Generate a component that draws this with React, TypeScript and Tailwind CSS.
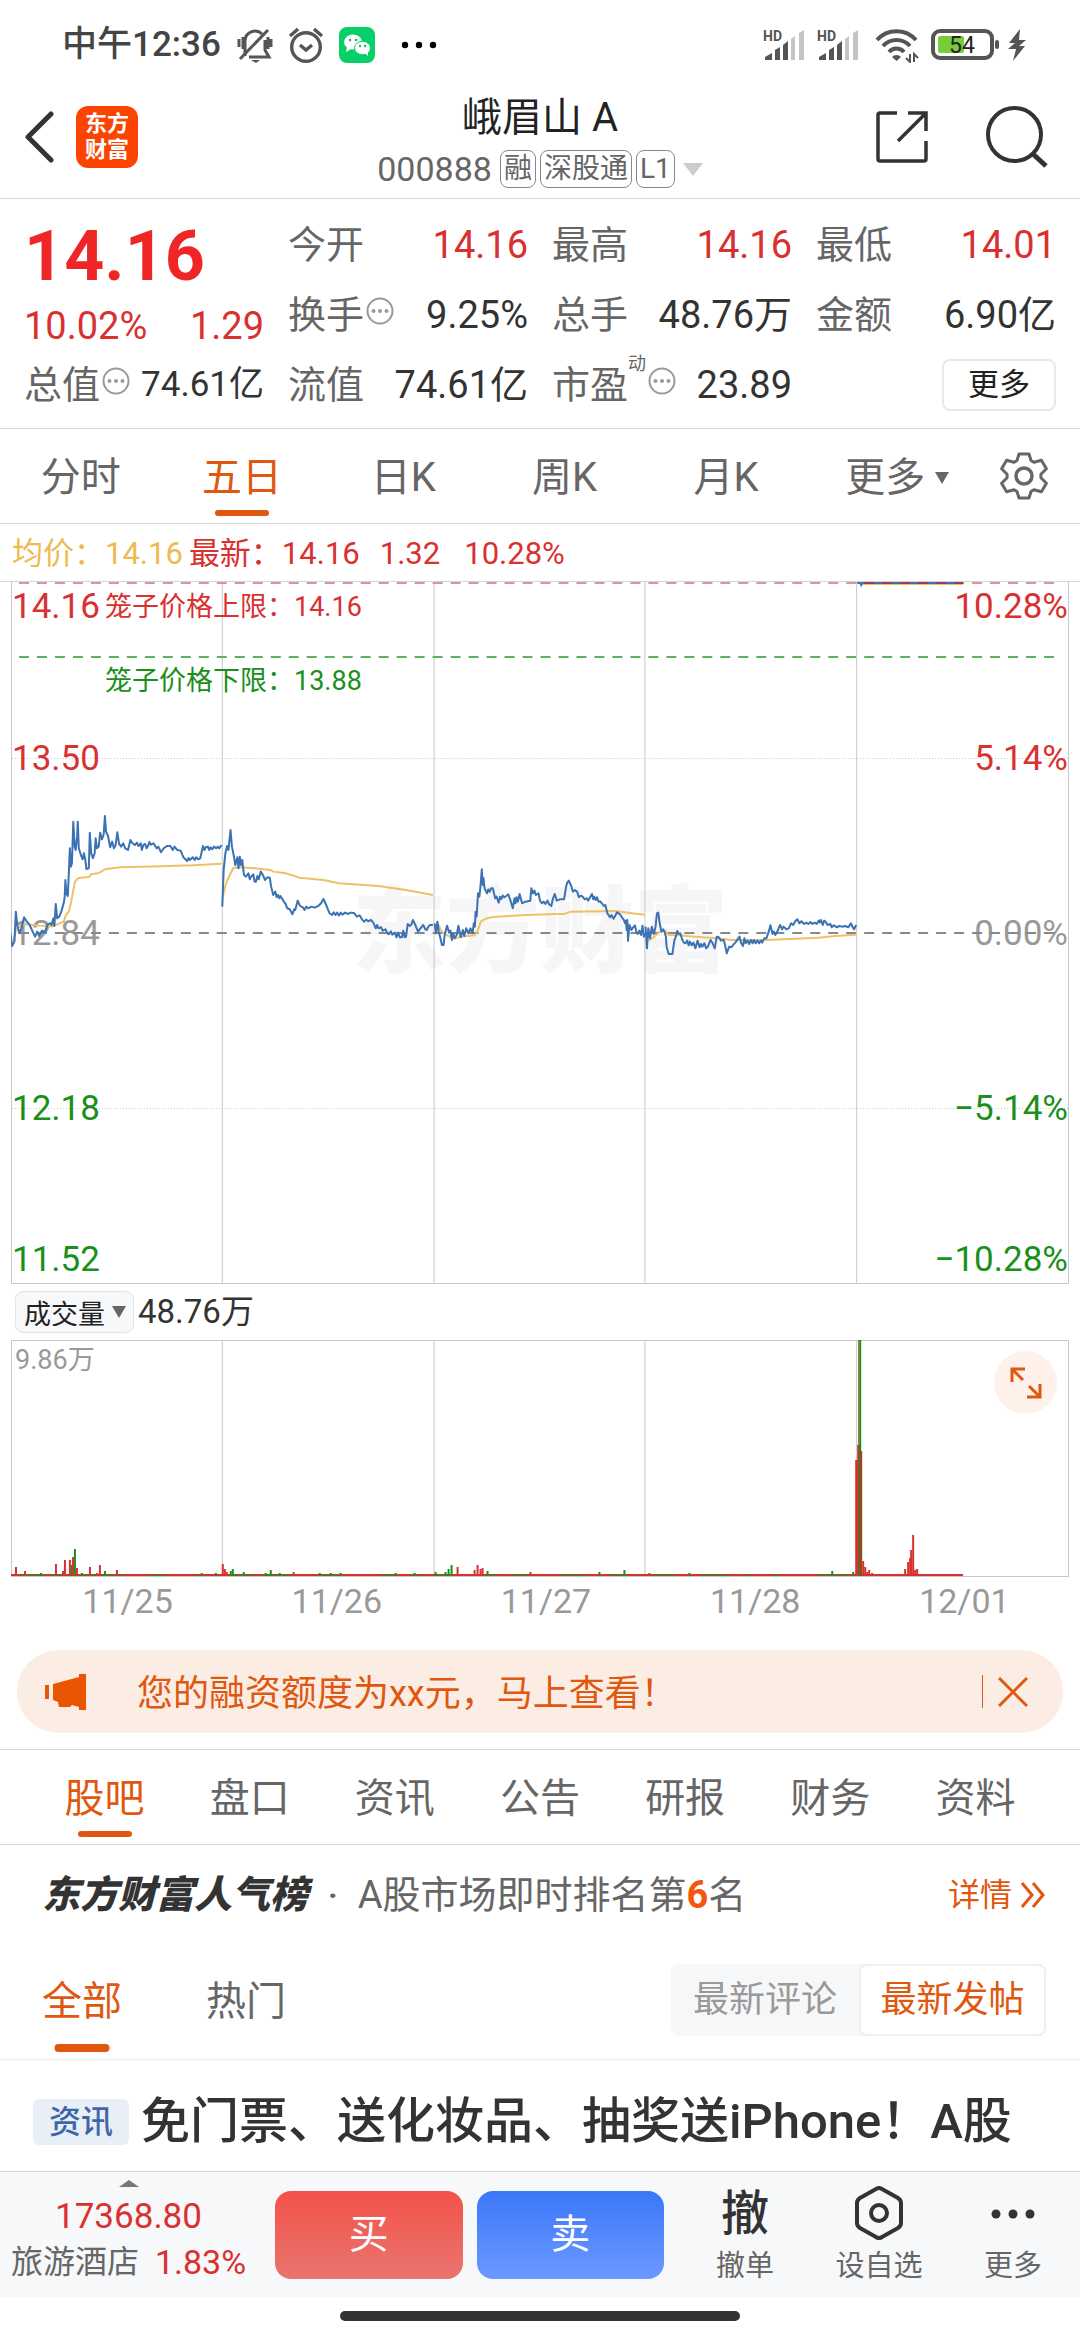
import React from "react";

const PRICE_A: string[] = [
  "30,1240 35,1278 42,1265 46,1175 50,1215 56,1240 62,1225 70,1192 78,1205 86,1215 95,1235 102,1250 108,1235 114,1248 122,1232 130,1237 138,1215 145,1210 150,1215 155,1195 158,1218 162,1152 166,1195 172,1190 178,1175 185,1150 188,1130 190,1080 193,1120 197,1128 200,1060 203,985 206,1040 209,1030 213,905 217,980 220,990 224,950 226,905 229,985 235,1005 240,1018 244,1000 248,1020 251,1047 258,1045 261,938 265,1000 270,1015 275,1000 278,955 282,985 287,980 291,938 296,958 301,945 305,888 308,935 314,948 320,982 326,965 331,985 336,975 341,937 346,972 352,980 358,970 364,985 372,990 379,960 385,970 392,975 398,968 402,978 409,970 412,990 417,975 422,972 426,985 430,978 434,966 438,974 446,970 455,985 460,980 468,997 476,985 485,978 495,978 502,990 507,980 515,990 525,992 533,1012 544,1023 548,1014 552,1020 560,1012 566,1020 570,1012 576,1018 582,1015 590,978 594,990 598,982 604,980 608,990 612,982 617,988 622,980 628,985 633,980 637,985 644,975",
  "646,1160 650,1050 655,1000 660,978 664,990 670,930 674,980 680,1010 684,1035 690,1012 693,1045 697,1010 700,1035 704,1020 709,1065 715,1070 722,1060 726,1078 730,1070 736,1063 740,1085 744,1085 748,1068 752,1078 758,1055 764,1065 770,1080 777,1072 784,1073 788,1100 794,1125 800,1115 804,1132 808,1125 812,1135 815,1128 825,1145 830,1152 835,1165 842,1168 850,1183 855,1168 858,1170 865,1142 872,1158 880,1162 885,1170 890,1160 895,1165 905,1160 915,1163 925,1158 933,1150 940,1137 948,1155 953,1168 958,1180 965,1185 970,1177 975,1185 980,1178 985,1187 990,1178 995,1184 1003,1178 1010,1182 1020,1178 1030,1180 1037,1190 1045,1186 1052,1198 1058,1205 1064,1199 1070,1204 1078,1200 1085,1208 1092,1225 1096,1215 1100,1225 1108,1222 1112,1232 1120,1228 1126,1240 1130,1243 1136,1234 1140,1244 1148,1238 1152,1252 1157,1238 1162,1252 1168,1252 1172,1232 1176,1252 1180,1250 1185,1212 1190,1218 1195,1215 1200,1200 1207,1215 1211,1225 1215,1235 1222,1225 1230,1215 1236,1228 1240,1230 1245,1220 1250,1215 1258,1215",
];

const AVG_A: string[] = [
  "38,1265 48,1225 70,1212 110,1217 150,1220 185,1205 192,1185 200,1175 207,1145 213,1110 218,1085 228,1074 258,1071 265,1063 285,1060 305,1048 350,1042 470,1039 560,1036 644,1031",
  "648,1130 655,1098 661,1080 668,1065 678,1044 700,1042 740,1045 785,1050 795,1055 830,1060 870,1073 940,1080 985,1090 1100,1098 1180,1110 1258,1125",
];

const PRICE_B: string[] = [
  "276,430 280,460 284,425 288,455 294,480 297,495 302,495 305,465 312,437 318,458 322,452 326,480 330,460 334,475 340,465 345,437 352,472 358,450 362,468 368,445 374,460 380,445 386,460 390,430 393,440 395,395 398,410 402,340 406,350 410,310 413,268 416,315 418,295 421,325 428,340 432,328 436,335 440,325 445,325 452,355 456,350 462,368 466,350 470,357 474,347 478,352 484,348 490,343 496,360 503,385 508,355 511,370 514,352 518,365 523,342 530,370 540,365 554,362 557,325 562,340 566,332 570,345 578,340 582,362 588,370 593,365 598,372 604,362 608,372 615,378 620,355 625,342 631,362 640,358 652,358 658,320 661,308 666,302 669,310 672,315 678,335 684,330 690,335 695,352 700,347 706,350 712,358 718,355 722,362 725,357 733,342 737,358 740,350 744,360 748,352 752,365 757,364 762,370 768,378 772,375 778,400 786,412 790,405 796,416 802,405 806,397 815,403 820,412 826,420 829,430 832,422 834,450 836,420 838,482 842,435 848,450 853,442 858,436 862,455 866,462 871,452 876,465 880,437 884,470 887,460",
  "889,440 893,505 897,445 902,475 907,440 913,462 918,440 922,400 926,398 930,430 935,455 940,448 945,458 948,470 950,500 956,522 967,522 970,500 973,480 977,470 981,453 986,462 990,460 995,478 1000,488 1005,490 1010,482 1014,496 1018,485 1023,496 1028,488 1034,505 1040,482 1046,502 1050,492 1054,500 1060,490 1065,505 1070,500 1078,480 1084,490 1090,505 1096,470 1102,472 1108,482 1116,480 1120,495 1125,520 1132,500 1138,502 1145,493 1150,488 1154,482 1162,470 1167,490 1172,498 1176,475 1180,490 1185,482 1190,492 1195,480 1200,490 1204,480 1209,490 1214,482 1219,490 1224,482 1228,488 1234,475 1240,475 1246,458 1252,436 1258,462 1262,455 1266,465 1272,455 1280,435 1286,448 1290,440 1298,448 1305,445 1312,430 1318,435 1324,424 1330,418 1336,430 1342,424 1350,432 1356,428 1362,432 1368,426 1374,432 1380,428 1386,432 1392,422 1395,428 1398,420 1404,435 1408,422 1412,425 1418,435 1426,432 1430,442 1436,436 1445,442 1452,438 1460,440 1470,438 1478,442 1486,430 1490,440 1495,448 1501,435",
];

const AVG_B: string[] = [
  "285,430 295,452 310,465 335,476 352,470 392,466 400,455 410,425 425,416 445,411 560,404 655,401 672,395 800,393 850,400 887,404",
  "898,482 915,470 930,455 945,452 958,466 985,466 1030,470 1090,474 1140,480 1240,480 1290,478 1390,473 1440,468 1500,464",
];

const RED = "#d93030";
const GREEN = "#1a8f1a";

const BARS: [number, number, "r" | "g"][] = [
  [16, 9, "r"], [25, 5, "r"], [41, 3, "g"], [56, 12, "r"], [63, 5, "r"], [65, 16, "r"], [70, 16, "r"],
  [72, 11, "g"], [73, 19, "r"], [75, 27, "g"], [77, 8, "r"], [82, 3, "g"], [90, 9, "r"], [97, 3, "r"], [100, 11, "r"],
  [105, 5, "g"], [117, 6, "r"], [202, 3, "r"], [216, 3, "g"], [223, 12, "r"], [225, 7, "r"], [227, 4, "r"],
  [231, 5, "g"], [233, 7, "g"], [244, 4, "g"], [266, 3, "g"], [271, 6, "g"], [280, 3, "g"], [294, 4, "r"], [320, 3, "g"],
  [331, 3, "g"], [341, 3, "g"], [396, 3, "g"], [415, 3, "g"], [436, 4, "g"], [446, 4, "g"], [449, 7, "g"], [452, 11, "g"], [458, 9, "r"],
  [475, 6, "r"], [478, 11, "r"], [481, 7, "r"], [483, 8, "r"], [488, 5, "g"], [531, 4, "r"], [600, 4, "g"],
  [625, 6, "g"], [650, 3, "r"], [690, 3, "g"], [833, 5, "g"], [854, 4, "g"],
  [864, 15, "r"], [866, 9, "r"], [868, 4, "r"], [870, 6, "r"], [873, 3, "r"],
  [906, 7, "r"], [909, 14, "r"], [911, 18, "r"], [912, 26, "r"], [914, 41, "r"], [916, 6, "r"], [918, 7, "r"],
];

const GREEN_BASE: [number, number][] = [
  [20, 24], [50, 16], [84, 12], [102, 20], [150, 16], [196, 10], [232, 22], [262, 30], [320, 22],
  [380, 14], [410, 12], [436, 16], [486, 12], [512, 20], [560, 26], [610, 18], [652, 24], [700, 30], [746, 6], [772, 8], [820, 30],
];

function Signal() {
  return (
    <svg viewBox="0 0 42 38" className="h-[38px] w-[42px] overflow-visible" aria-hidden="true">
      <text x="0" y="15" fontSize="14" fontWeight="700" fill="#555" fontFamily="Roboto, sans-serif">HD</text>
      <path d="M2 34v-3l7-4v7zM12 34V24l5-3v13zM20 34V19l5-4v19z" fill="#555" />
      <path d="M28 34V13l4-3v24zM36 34V7l5-3v30z" fill="#c4c4c4" />
    </svg>
  );
}

function StatusBar() {
  return (
    <div className="flex h-[72px] items-center justify-between pt-[18px] pr-[54px] pl-[62px] text-[#444]">
      <div className="flex items-center">
        <span className="text-[35px] leading-9 font-medium">中午12:36</span>
        <svg viewBox="0 0 36 36" className="ml-4 size-9" fill="none" stroke="#555" strokeWidth="3" aria-hidden="true">
          <path d="M8 29V14a10 10 0 0 1 17-7M28 13v10l4 7H12M2 12v8M6 10v12M34 12v8M31 10v12" />
          <path d="M3 32 31 3" />
          <path d="M14 33h9l-4 3z" fill="#555" stroke="none" />
        </svg>
        <svg viewBox="0 0 36 36" className="ml-[15px] size-9" fill="none" stroke="#555" strokeWidth="3.4" aria-hidden="true">
          <circle cx="18" cy="20" r="14.3" />
          <path d="m12 18 6 5 6-5M2 9l8-7M34 9l-8-7" />
        </svg>
        <svg viewBox="0 0 36 36" className="ml-[15px] size-9" aria-hidden="true">
          <rect width="36" height="36" rx="8" fill="#07d068" />
          <ellipse cx="14" cy="15" rx="9" ry="7.6" fill="#fff" />
          <path d="m8 20-1 5 5-3z" fill="#fff" />
          <ellipse cx="23.500" cy="21" rx="8" ry="6.700" fill="#fff" stroke="#07d068" />
          <path d="m26 26 3 3v-4z" fill="#fff" />
          <g fill="#07c160"><circle cx="11" cy="13" r="1.300" /><circle cx="17" cy="13" r="1.300" /><circle cx="21" cy="19" r="1.200" /><circle cx="26" cy="19" r="1.200" /></g>
        </svg>
        <svg viewBox="0 0 36 8" className="ml-[26px] h-2 w-9" fill="#000" aria-hidden="true">
          <circle cx="4" cy="4" r="3.200" /><circle cx="18" cy="4" r="3.200" /><circle cx="32" cy="4" r="3.200" />
        </svg>
      </div>
      <div className="flex items-center">
        <Signal />
        <div className="ml-3"><Signal /></div>
        <svg viewBox="0 0 44 36" className="ml-4 h-9 w-11" fill="none" stroke="#555" strokeWidth="4" aria-hidden="true">
          <path d="M2 13a26 26 0 0 1 39 0M8 19a18 18 0 0 1 27 0M14 25a10 10 0 0 1 15 0" />
          <path d="m17 30 4.500 4 4.500-4a6 6 0 0 0-9 0z" fill="#555" stroke="none" />
          <path d="M35 27v8l-4-4M39 35v-8l4 4" strokeWidth="2" />
        </svg>
        <svg viewBox="0 0 70 32" className="ml-3 h-8 w-[70px]" aria-hidden="true">
          <rect x="2" y="2" width="59" height="27" rx="7" fill="#fff" stroke="#555" strokeWidth="4" />
          <rect x="7" y="7" width="26" height="17" rx="2" fill="#7acb3c" />
          <rect x="64" y="11" width="4" height="9" rx="2" fill="#555" />
          <text x="31" y="24" textAnchor="middle" fontSize="23" fill="#222" fontFamily="Roboto, sans-serif">54</text>
        </svg>
        <svg viewBox="0 0 18 32" className="ml-[7px] h-8 w-[18px]" fill="#555" aria-hidden="true"><path d="M12 0 1 14h6l-7 6h8L5 32 17 17h-6l7-6h-7z" /></svg>
      </div>
    </div>
  );
}

function Header() {
  return (
    <header className="grid h-[127px] grid-cols-[1fr_auto_1fr] items-center border-b border-[#d4d4d4] px-6">
      <div className="flex items-center pt-1">
        <button type="button" aria-label="返回" className="flex h-16 w-[30px] items-center justify-center">
          <svg viewBox="0 0 30 52" className="h-[52px] w-[30px]" fill="none" stroke="#333" strokeWidth="5" strokeLinecap="round" strokeLinejoin="round"><path d="M27 3 4 26l23 23" /></svg>
        </button>
        <div className="ml-[22px] flex size-[62px] flex-col justify-center rounded-xl bg-[#fb4402] text-center text-[22px] leading-[26px] font-bold text-white">
          <span>东方</span><span>财富</span>
        </div>
      </div>
      <div className="flex flex-col items-center pt-4">
        <h1 className="text-[40px] leading-[52px] text-[#222]">峨眉山 A</h1>
        <button type="button" className="flex h-[50px] items-center gap-1 text-[#666]">
          <span className="mr-1 text-[34px]">000888</span>
          <span className="h-[38px] rounded-lg border border-[#888] px-[3px] text-[28px] leading-9">融</span>
          <span className="h-[38px] rounded-lg border border-[#888] px-[3px] text-[28px] leading-9">深股通</span>
          <span className="h-[38px] rounded-lg border border-[#888] px-[3px] text-[28px] leading-9">L1</span>
          <svg viewBox="0 0 20 13" className="ml-1 h-[13px] w-5" fill="#ccc"><path d="M0 0h20L10 13z" /></svg>
        </button>
      </div>
      <div className="flex items-center justify-end gap-[58px] pt-1 pr-2">
        <button type="button" aria-label="分享" className="size-[52px]">
          <svg viewBox="0 0 52 52" className="size-[52px]" fill="none" stroke="#333" strokeWidth="3.500"><path d="M21 2H4a2 2 0 0 0-2 2v44a2 2 0 0 0 2 2h44a2 2 0 0 0 2-2V30M32 2h18v18M50 2 22 30" /></svg>
        </button>
        <button type="button" aria-label="搜索" className="size-[62px]">
          <svg viewBox="0 0 62 62" className="size-[62px]" fill="none" stroke="#333" strokeWidth="4"><circle cx="28.500" cy="28.500" r="26.500" /><path d="m47 48 13 12" strokeWidth="5" /></svg>
        </button>
      </div>
    </header>
  );
}

function InfoDot() {
  return (
    <svg viewBox="0 0 28 28" className="-mt-2 ml-0.5 size-7" fill="#999" aria-hidden="true">
      <circle cx="14" cy="14" r="12.500" fill="none" stroke="#999" strokeWidth="2" />
      <circle cx="7.500" cy="14" r="2" /><circle cx="14" cy="14" r="2" /><circle cx="20.500" cy="14" r="2" />
    </svg>
  );
}

function Stat({ label, value, red, dot, sup }: { label: string; value: string; red?: boolean; dot?: boolean; sup?: string }) {
  return (
    <div className="flex h-[70px] items-center justify-between whitespace-nowrap">
      <dt className="flex items-center text-[38px] text-[#666]">
        {label}
        {sup && <sup className="-mt-6 text-[18px]">{sup}</sup>}
        {dot && <InfoDot />}
      </dt>
      <dd className={red ? "text-[38px] text-[#d93030]" : "text-[38px] text-[#333]"}>{value}</dd>
    </div>
  );
}

function Quote() {
  return (
    <dl className="grid grid-cols-4 gap-6 border-b border-[#d4d4d4] px-6 pt-[11px] pb-2">
      <div>
        <div className="flex h-[92px] items-center text-[70px] font-bold text-[#ef2626]">14.16</div>
        <div className="flex h-12 items-center justify-between text-[38px] text-[#d93030]"><span>10.02%</span><span>1.29</span></div>
        <div className="flex h-[70px] items-center justify-between whitespace-nowrap">
          <dt className="flex items-center text-[38px] text-[#666]">总值<InfoDot /></dt>
          <dd className="text-[35px] text-[#333]">74.61亿</dd>
        </div>
      </div>
      <div>
        <Stat label="今开" value="14.16" red />
        <Stat label="换手" value="9.25%" dot />
        <Stat label="流值" value="74.61亿" />
      </div>
      <div>
        <Stat label="最高" value="14.16" red />
        <Stat label="总手" value="48.76万" />
        <Stat label="市盈" value="23.89" dot sup="动" />
      </div>
      <div>
        <Stat label="最低" value="14.01" red />
        <Stat label="金额" value="6.90亿" />
        <div className="flex h-[70px] items-center justify-end">
          <button type="button" className="h-[52px] w-[114px] rounded-lg border-2 border-[#e8e8e8] text-[31px] leading-[46px] text-[#222]">更多</button>
        </div>
      </div>
    </dl>
  );
}

function PeriodTabs() {
  const tabs = ["分时", "五日", "日K", "周K", "月K"];
  return (
    <nav className="flex h-[95px] border-b border-[#d4d4d4] text-[40px] text-[#666]">
      {tabs.map((t) => (
        <button key={t} type="button" className={t === "五日" ? "relative flex-1 pt-1 text-[#e0570f]" : "relative flex-1 pt-1"}>
          {t}
          {t === "五日" && <span className="absolute bottom-[7px] left-1/2 h-1.5 w-[54px] -translate-x-1/2 rounded-full bg-[#e0570f]" />}
        </button>
      ))}
      <button type="button" className="flex flex-1 items-center justify-center gap-2.5 pt-1">
        <span className="ml-5">更多</span>
        <svg viewBox="0 0 14 12" className="h-3 w-3.5" fill="#666"><path d="M0 0h14L7 12z" /></svg>
      </button>
      <button type="button" aria-label="设置" className="flex w-[112px] items-center justify-center">
        <svg viewBox="-24 -24 48 48" className="size-12" fill="none" stroke="#666" strokeWidth="3" strokeLinejoin="round">
          <path d="M-5-22 5-22 7-15.500 9.900-13.800 17.400-15.800 22.400-7.200 16.900-1.700 16.900 1.700 22.400 7.200 17.400 15.800 9.900 13.800 7 15.500 5 22-5 22-7 15.500-9.900 13.800-17.400 15.800-22.400 7.200-16.900 1.700-16.900-1.700-22.400-7.200-17.400-15.800-9.900-13.800-7-15.500Z" />
          <circle r="8" strokeWidth="3.500" />
        </svg>
      </button>
    </nav>
  );
}

function Series({ points, color, width }: { points: string[]; color: string; width: number }) {
  return (
    <>
      {points.map((p) => (
        <polyline key={p} points={p} fill="none" stroke={color} strokeWidth={width} strokeLinejoin="round" vectorEffect="non-scaling-stroke" />
      ))}
    </>
  );
}

function PriceChart() {
  return (
    <div className="relative mx-[11px] h-[702px] text-[35px] leading-9">
      <div className="absolute inset-0 flex items-center justify-center text-[94px] leading-[140px] font-black text-[#f6f6f6]">东方财富</div>
      <div className="absolute top-[334px] left-px text-[#999]">12.84</div>
      <div className="absolute top-[334px] right-px text-[#999]">0.00%</div>
      <svg viewBox="11 582 1059 702" preserveAspectRatio="none" className="absolute inset-0 h-full w-full" aria-label="五日走势图" role="img">
        <g stroke="#c8c8c8" strokeWidth="1" fill="none">
          <path d="M11.500 582V1283.500H1069.500V582M222.500 582v702M434.500 582v702M645.500 582v702M857.500 582v702" />
          <path d="M12 758.500H1069M12 1108.500H1069" strokeDasharray="1 2" />
        </g>
        <path d="M19 583H1056" stroke="#e29393" strokeWidth="2" strokeDasharray="10 8" />
        <path d="M19 657H1056" stroke="#5ab45a" strokeWidth="2" strokeDasharray="10 8" />
        <path d="M19 933H1062" stroke="#888" strokeWidth="2" strokeDasharray="10 8" />
        <g transform="translate(0 520) scale(0.3444 0.3333)">
          <Series points={AVG_A} color="#eec068" width={2} />
          <Series points={PRICE_A} color="#3a72b4" width={2} />
        </g>
        <g transform="translate(340 780) scale(0.3444 0.3333)">
          <Series points={AVG_B} color="#eec068" width={2} />
          <Series points={PRICE_B} color="#3a72b4" width={2} />
        </g>
        <path d="M863 584.500H964" stroke="#eec068" strokeWidth="1" />
        <path d="M858 583h3l1 2 1-2H964" stroke="#3a72b4" strokeWidth="2" fill="none" />
        <path d="M865 583H964" stroke="#a03a50" strokeWidth="2" strokeDasharray="10 8" />
      </svg>
      <div className="absolute top-[7px] left-px text-[#d93030]">14.16</div>
      <div className="absolute top-[7px] left-[94px] text-[27px] text-[#d93030]">笼子价格上限：14.16</div>
      <div className="absolute top-[81px] left-[94px] text-[27px] text-[#1a8f1a]">笼子价格下限：13.88</div>
      <div className="absolute top-[159px] left-px text-[#d93030]">13.50</div>
      <div className="absolute top-[509px] left-px text-[#1a8f1a]">12.18</div>
      <div className="absolute top-[660px] left-px text-[#1a8f1a]">11.52</div>
      <div className="absolute top-[7px] right-px text-[#d93030]">10.28%</div>
      <div className="absolute top-[159px] right-px text-[#d93030]">5.14%</div>
      <div className="absolute top-[509px] right-px text-[#1a8f1a]">−5.14%</div>
      <div className="absolute top-[660px] right-px text-[#1a8f1a]">−10.28%</div>
    </div>
  );
}

function VolumeChart() {
  return (
    <>
      <div className="flex h-14 items-center gap-1 px-[15px]">
        <label className="relative flex items-center">
          <span className="sr-only">指标</span>
          <select className="h-[42px] w-[119px] appearance-none rounded-lg border border-[#e3e4ea] bg-[#f7f8fa] pl-2 font-['Noto_Sans_CJK_SC',sans-serif] text-[27px] leading-none text-[#222]">
            <option>成交量</option>
          </select>
          <svg viewBox="0 0 14 12" className="pointer-events-none absolute right-2 h-3 w-3.5" fill="#666"><path d="M0 0h14L7 12z" /></svg>
        </label>
        <span className="text-[33px] text-[#333]">48.76万</span>
      </div>
      <div className="relative mx-[11px] h-[237px]">
        <svg viewBox="11 1340 1059 237" preserveAspectRatio="none" className="absolute inset-0 h-full w-full" role="img" aria-label="成交量图">
          <path d="M11.500 1576V1340.500H1069.500V1576.500H11M222.500 1340v236M434.500 1340v236M645.500 1340v236M857.500 1340v236" stroke="#c8c8c8" fill="none" />
          <rect x="11" y="1574" width="953" height="2" fill={RED} />
          {GREEN_BASE.map(([x, w]) => <rect key={x} x={x} y="1574" width={w} height="1" fill={GREEN} />)}
          {BARS.map(([x, h, c]) => <rect key={x} x={x - 1} y={1576 - h} width="2" height={h} fill={c === "r" ? RED : GREEN} />)}
          <path d="M856 1576V1460h2v-15h3v131z" fill={RED} />
          <rect x="859" y="1340" width="1" height="236" fill="#9a4a2a" />
          <rect x="860" y="1340" width="2" height="236" fill={GREEN} />
          <rect x="861" y="1451" width="2" height="125" fill="#a04420" />
        </svg>
        <div className="absolute top-0.5 left-1 text-[27px] leading-9 text-[#999]">9.86万</div>
        <button type="button" aria-label="全屏" className="absolute top-[11px] right-3 flex size-[63px] items-center justify-center rounded-full bg-[#fef1ea]">
          <svg viewBox="0 0 32 32" className="size-8" fill="none" stroke="#e0570f" strokeWidth="3"><path d="M2 15V2h13M3 3l10 10M30 17v13H17M29 29 19 19" /></svg>
        </button>
      </div>
      <div className="mx-[11px] grid h-[73px] grid-cols-5 pt-1 pl-3 text-center text-[34px] leading-10 text-[#999]">
        {["11/25", "11/26", "11/27", "11/28", "12/01"].map((d) => <span key={d}>{d}</span>)}
      </div>
    </>
  );
}

function Banner() {
  return (
    <div className="mx-[17px] flex h-[83px] items-center rounded-full bg-[#fcede4] pr-[35px] pl-7 text-[#e0570f]">
      <svg viewBox="0 0 42 36" className="h-9 w-[42px]" fill="#ea5504" aria-hidden="true"><path d="M0 11h4v14H0zM8 10 34 3V0h7v36h-7v-3l-7-2-2 2H14l-1-5-5-2z" /></svg>
      <span className="ml-[50px] flex-1 pt-1 text-[36px]">您的融资额度为xx元，马上查看！</span>
      <span className="h-[33px] w-px bg-[#e0570f]" />
      <button type="button" aria-label="关闭" className="ml-[15px] size-[30px]">
        <svg viewBox="0 0 30 30" className="size-[30px]" fill="none" stroke="#e0570f" strokeWidth="3"><path d="m1 1 28 28M29 1 1 29" /></svg>
      </button>
    </div>
  );
}

function ContentTabs() {
  const tabs = ["股吧", "盘口", "资讯", "公告", "研报", "财务", "资料"];
  return (
    <nav className="mt-4 flex h-24 border-y border-[#d4d4d4] px-8 text-[40px] text-[#666]">
      {tabs.map((t) => (
        <button key={t} type="button" className={t === "股吧" ? "relative flex-1 pt-1 text-[#e0570f]" : "relative flex-1 pt-1"}>
          {t}
          {t === "股吧" && <span className="absolute bottom-[7px] left-1/2 h-1.5 w-[54px] -translate-x-1/2 rounded-full bg-[#e0570f]" />}
        </button>
      ))}
    </nav>
  );
}

function Feed() {
  return (
    <section>
      <div className="flex h-[100px] items-center pr-[34px] pl-[42px] text-[#666]">
        <strong className="text-[38px] font-black text-[#333] italic">东方财富人气榜</strong>
        <span className="px-5 text-[32px] font-bold">·</span>
        <span className="text-[38px]">A股市场即时排名第<b className="text-[#f4570b]">6</b>名</span>
        <a href="#rank" className="ml-auto flex items-center gap-2 text-[32px] text-[#e0570f]">
          详情
          <svg viewBox="0 0 26 26" className="size-[26px]" fill="none" stroke="#e0570f" strokeWidth="3"><path d="m2 1 10 12L2 25M13 1l10 12-10 12" /></svg>
        </a>
      </div>
      <div className="flex h-[116px] items-center border-b-[3px] border-[#f5f6f7] pr-[34px] pl-[42px]">
        <button type="button" className="relative h-full text-[40px] text-[#e0570f]">
          全部
          <span className="absolute bottom-1.5 left-1/2 h-2 w-[55px] -translate-x-1/2 rounded-full bg-[#e0570f]" />
        </button>
        <button type="button" className="ml-[84px] h-full text-[40px] text-[#666]">热门</button>
        <div className="mb-1 ml-auto flex h-[72px] rounded-lg bg-[#f6f7f9] text-[36px]">
          <button type="button" className="w-[188px] text-[#999]">最新评论</button>
          <button type="button" className="w-[187px] rounded-lg border-2 border-[#efeff0] bg-white text-[#e0570f]">最新发帖</button>
        </div>
      </div>
      <a href="#news" className="flex h-[110px] items-center gap-3 overflow-hidden px-[33px] pt-3 whitespace-nowrap">
        <span className="h-[46px] rounded-md bg-[#e9eff7] px-4 text-[32px] leading-[46px] font-medium text-[#3f66a8]">资讯</span>
        <span className="text-[49px] font-medium text-[#333]">免门票、送化妆品、抽奖送iPhone！A股</span>
      </a>
    </section>
  );
}

function BottomBar() {
  return (
    <footer className="flex h-[126px] items-center border-t border-[#d4d4d4] bg-[#f7f8fa]">
      <button type="button" className="flex h-full w-[257px] flex-col items-center pt-2 whitespace-nowrap">
        <svg viewBox="0 0 20 7" className="h-[7px] w-5" fill="#777"><path d="M0 7h20L10 0z" /></svg>
        <span className="mt-2 text-[35px] leading-[44px] text-[#d93030]">17368.80</span>
        <span className="flex items-center gap-4 text-[32px] leading-[46px] text-[#666]">旅游酒店<span className="text-[34px] text-[#d93030]">1.83%</span></span>
      </button>
      <button type="button" className="ml-[18px] h-[88px] flex-1 rounded-2xl bg-linear-to-b from-[#f3514a] to-[#e9746e] text-[40px] text-white">买</button>
      <button type="button" className="ml-3.5 h-[88px] flex-1 rounded-2xl bg-linear-to-b from-[#3a77f8] to-[#6c98ff] text-[40px] text-white">卖</button>
      <div className="ml-3.5 flex text-[29px] leading-9 text-[#666]">
        <button type="button" className="flex w-[134px] flex-col items-center">
          <span className="mb-1.5 h-14 text-[48px] leading-[56px] font-medium text-[#333]">撤</span>
          撤单
        </button>
        <button type="button" className="flex w-[134px] flex-col items-center">
          <svg viewBox="0 0 48 54" className="mb-2 h-[54px] w-12" fill="none" stroke="#333" strokeWidth="4" strokeLinejoin="round"><path d="M21 3q3-2 6 0l16 9q3 2 3 5v20q0 3-3 5l-16 9q-3 2-6 0L5 42q-3-2-3-5V17q0-3 3-5z" /><circle cx="24" cy="27" r="8" /></svg>
          设自选
        </button>
        <button type="button" className="flex w-[134px] flex-col items-center">
          <svg viewBox="0 0 44 54" className="mb-2 h-[54px] w-11" fill="#333"><circle cx="5" cy="28" r="4.500" /><circle cx="22" cy="28" r="4.500" /><circle cx="39" cy="28" r="4.500" /></svg>
          更多
        </button>
      </div>
    </footer>
  );
}

export default function App() {
  return (
    <main className="min-h-screen bg-white font-['Roboto','Noto_Sans_CJK_SC',sans-serif]">
      <StatusBar />
      <Header />
      <Quote />
      <PeriodTabs />
      <div className="flex h-[58px] items-center border-b border-[#d4d4d4] px-3 pt-1 text-[31px] whitespace-nowrap text-[#d93030]">
        <span className="text-[#eeba52]">均价：14.16</span>
        <span className="ml-1.5">最新：14.16</span>
        <span className="ml-5">1.32</span>
        <span className="ml-6">10.28%</span>
      </div>
      <PriceChart />
      <VolumeChart />
      <Banner />
      <ContentTabs />
      <Feed />
      <BottomBar />
      <div className="flex h-[43px] items-start justify-center pt-3.5">
        <div className="h-2.5 w-[400px] rounded-full bg-[#333]" />
      </div>
    </main>
  );
}
